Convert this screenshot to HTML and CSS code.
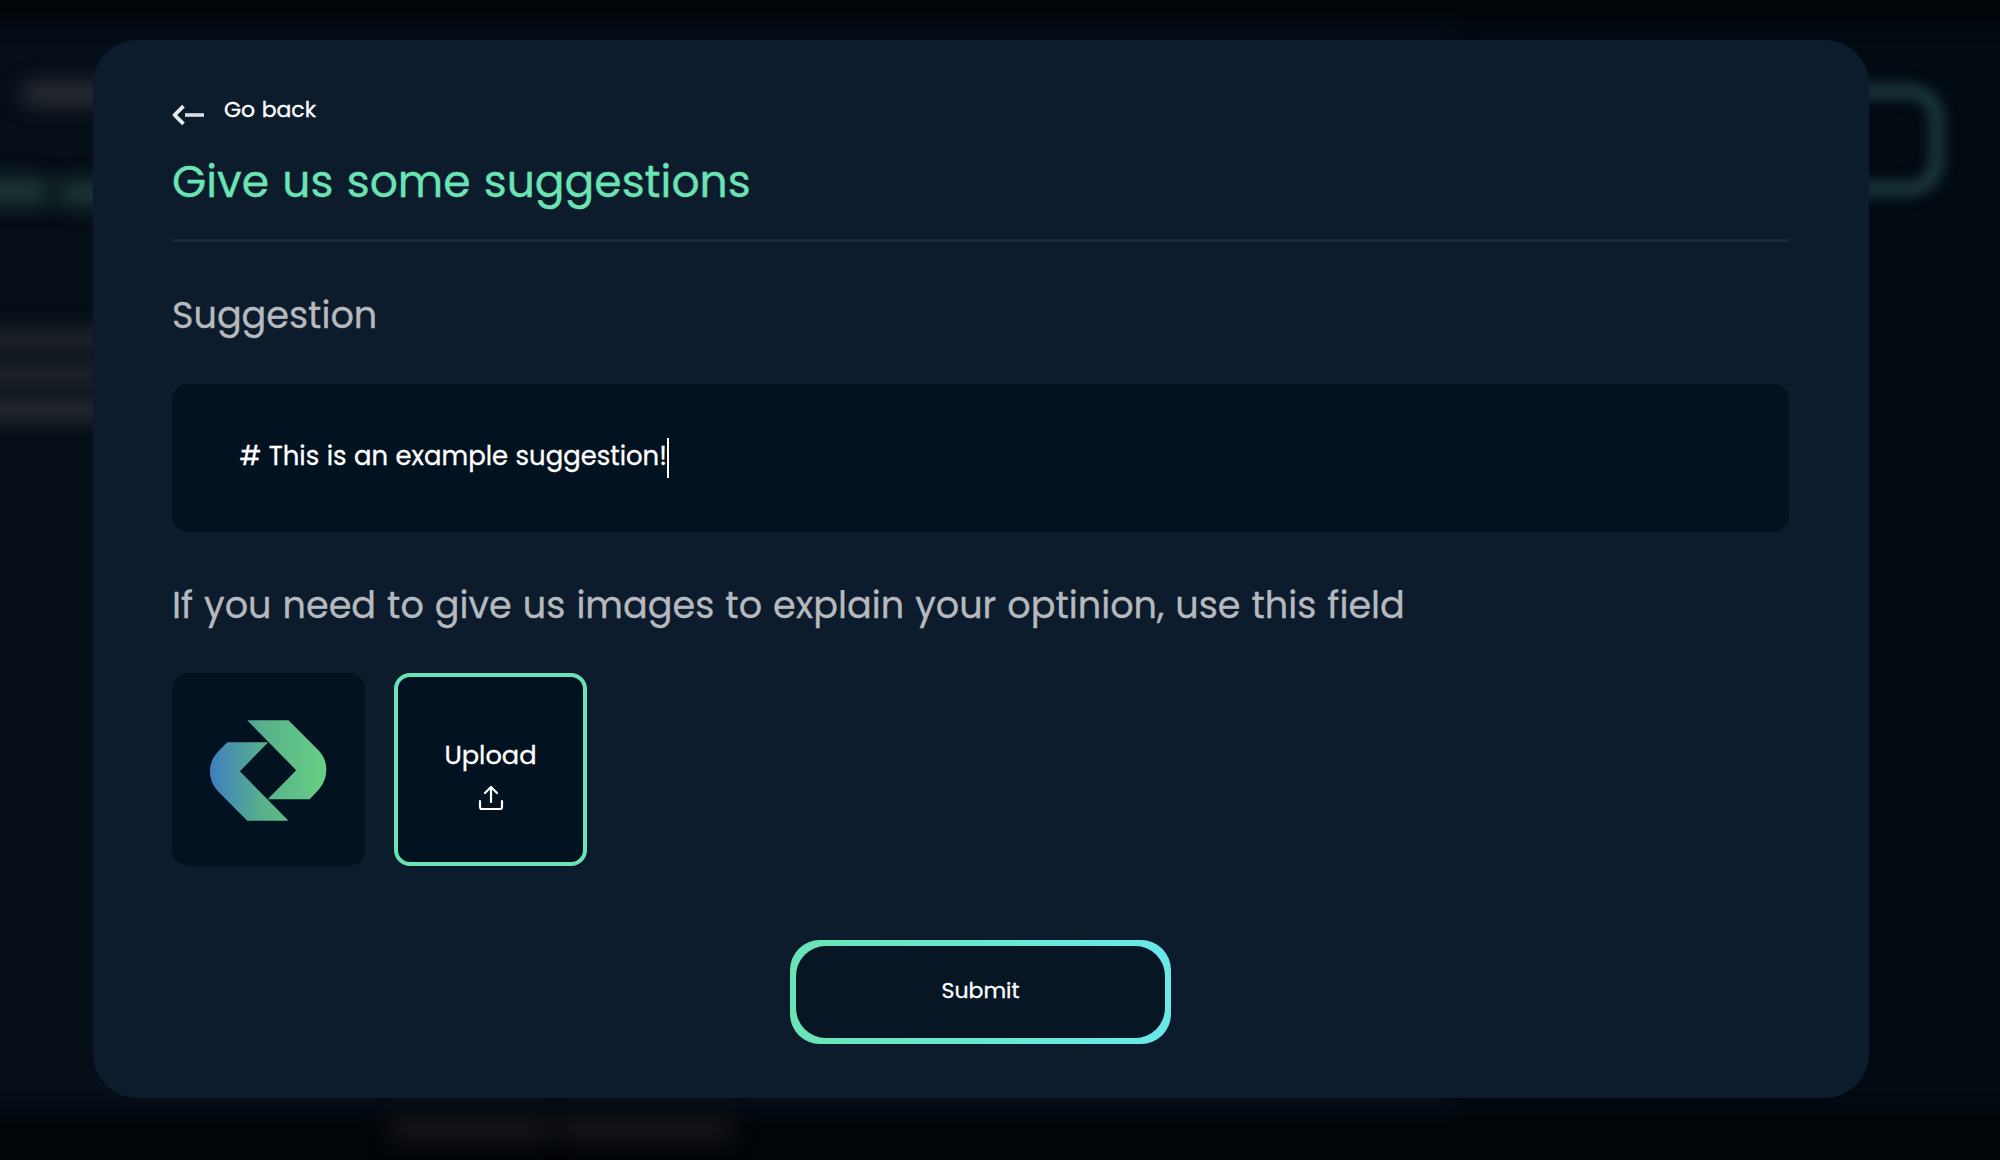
FILE: index.html
```html
<!DOCTYPE html>
<html lang="en">
<head>
<meta charset="utf-8">
<title>Suggestions</title>
<link rel="stylesheet" href="styles.css">
</head>
<body>
<div class="backdrop" aria-hidden="true">
  <i class="panel"></i>
  <i class="bar bar-top"></i><i class="bar bar-bottom"></i>
  <i class="smudge s-back"></i><i class="smudge s-title"></i><i class="smudge s-title2"></i>
  <i class="smudge s-line1"></i><i class="smudge s-line2"></i><i class="smudge s-line3"></i>
  <i class="smudge s-foot1"></i><i class="smudge s-foot2"></i>
  <i class="ghost-button"></i>
</div>
<main class="modal">
  <a class="back">
    <svg class="back-icon" width="32" height="22" viewBox="0 0 32 22"><path d="M11.500 2.200 2.600 11l8.900 8.800" fill="none" stroke="#e8eaec" stroke-width="3.800" stroke-linejoin="round"/><path d="M13 11H32" stroke="#dcdde2" stroke-width="3.600"/></svg>
    <span class="back-text">Go back</span>
  </a>
  <h1 class="title"><span class="title-text">Give us some suggestions</span></h1>
  <h2 class="label"><span class="label-short">Suggestion</span></h2>
  <div class="field"><span class="field-text"># This is an example suggestion!</span><span class="caret"></span></div>
  <h2 class="label label-images"><span class="label-long">If you need to give us images to explain your optinion, use this field</span></h2>
  <div class="tiles">
    <div class="tile">
      <svg class="logo" width="118" height="103" viewBox="209.300 718 118 103">
        <defs><linearGradient id="g" gradientUnits="userSpaceOnUse" x1="210" y1="0" x2="325" y2="0"><stop offset="0" stop-color="#3f7fbf"/><stop offset=".45" stop-color="#57b08b"/><stop offset="1" stop-color="#68cf84"/></linearGradient></defs>
        <path fill="url(#g)" d="M246.500 720.300H287.800L318 750.500C328 761 328 777 319 788.500L309 799.300H267L295.500 770.300ZM226.500 742.300H267.500L239.200 771.300 287.800 820.700H246.500L217 791C206.500 779 206.500 763 217.500 751.500Z"/>
      </svg>
    </div>
    <div class="tile upload">
      <span class="upload-text">Upload</span>
      <svg class="upload-icon" width="26" height="26" viewBox="0 0 26 26" fill="none" stroke="#fff" stroke-width="2.200" stroke-linecap="round" stroke-linejoin="round"><path d="M13 17V2.500M7 8l6-6 6 6M2 16v6a2 2 0 0 0 2 2h18a2 2 0 0 0 2-2v-6"/></svg>
    </div>
  </div>
  <button class="submit"><span class="submit-text">Submit</span></button>
</main>
</body>
</html>
```
FILE: styles.css
```css
* { box-sizing: border-box; }
body {
  margin: 0;
  height: 1160px;
  display: flex;
  justify-content: center;
  align-items: flex-start;
  padding: 40px 39px 0 0;
  overflow: hidden;
  background: #020a12;
  color: #fff;
  font-family: Poppins, Inter, "Liberation Sans", sans-serif;
  word-spacing: .035em;
  -webkit-text-stroke: .3px currentColor;
  position: relative;
}
/* dimmed, out-of-focus page behind the dialog */
.backdrop { position: absolute; inset: 0; overflow: hidden; }
.backdrop i { position: absolute; }
.panel { left: -40px; top: 0; width: 1493px; height: 1160px; background: #060e18; filter: blur(10px); }
.bar { left: -40px; width: 2080px; background: #010408; filter: blur(10px); }
.bar-top { top: -40px; height: 60px; }
.bar-bottom { top: 1115px; height: 90px; }
.smudge { filter: blur(10px); background: #2b2e34; border-radius: 8px; }
.s-back { left: 22px; top: 82px; width: 100px; height: 23px; }
.s-title { left: -30px; top: 178px; width: 80px; height: 27px; background: #1b3835; }
.s-title2 { left: 58px; top: 180px; width: 64px; height: 26px; background: #1b3835; }
.s-line1 { left: -30px; top: 330px; width: 150px; height: 19px; background: #26292f; }
.s-line2 { left: -30px; top: 365px; width: 150px; height: 19px; background: #26292f; }
.s-line3 { left: -30px; top: 399px; width: 150px; height: 22px; background: #292c32; }
.s-foot1 { left: 388px; top: 1116px; width: 166px; height: 26px; background: #141518; }
.s-foot2 { left: 556px; top: 1116px; width: 178px; height: 26px; background: #141518; }
.ghost-button { left: 1560px; top: 84px; width: 384px; height: 112px; border: 14px solid #1d3d40; border-radius: 36px; filter: blur(7px); }

.modal {
  position: relative;
  width: 1776px;
  height: 1058px;
  padding: 57px 79.500px 0;
  border-radius: 44px;
  background: #0d1c2c;
  display: flex;
  flex-direction: column;
}
.back { display: flex; align-items: flex-start; gap: 20px; height: 43px; }
.back-icon { margin-top: 7px; }
.back-text { font-size: 22px; line-height: 26px; white-space: nowrap; }
.title {
  margin: 0;
  height: 102px;
  border-bottom: 3px solid #1b2a3b;
  font-weight: 400;
  font-size: 44px;
  line-height: 84px;
  color: #6ae4b5;
  white-space: nowrap;
  word-spacing: .035em;
}
.label { margin: 0; height: 142px; padding-top: 48px; font-weight: 400; font-size: 36.600px; line-height: 52px; color: #b6babf; white-space: nowrap; word-spacing: .035em; }
.label-images { height: 141px; }
.field {
  height: 148px;
  padding: 54px 67.500px;
  border-radius: 16px;
  background: #021220;
  display: flex;
  align-items: flex-start;
  font-size: 25.900px;
  line-height: 37px;
  white-space: nowrap;
}
.caret { width: 2px; height: 40px; background: #fff; }
.tiles { display: flex; gap: 29px; }
.tile { width: 193px; height: 193px; border-radius: 16px; background: #021220; display: flex; flex-direction: column; align-items: center; justify-content: center; }
.upload { border: 4px solid #6ae4b5; gap: 12px; padding-top: 8px; }
.upload-text { font-size: 25.700px; line-height: 36px; }
.submit {
  align-self: center;
  width: 381px;
  height: 104px;
  margin-top: 74px;
  padding: 6px;
  border: 0;
  border-radius: 30px;
  background: linear-gradient(90deg, #6ae4b5, #6ae8ea);
  color: #fff;
  font: inherit;
  font-size: 22px;
  display: flex;
}
.submit-text { flex: 1; height: 92px; line-height: 90px; border-radius: 30px; background: #061625; }
```
